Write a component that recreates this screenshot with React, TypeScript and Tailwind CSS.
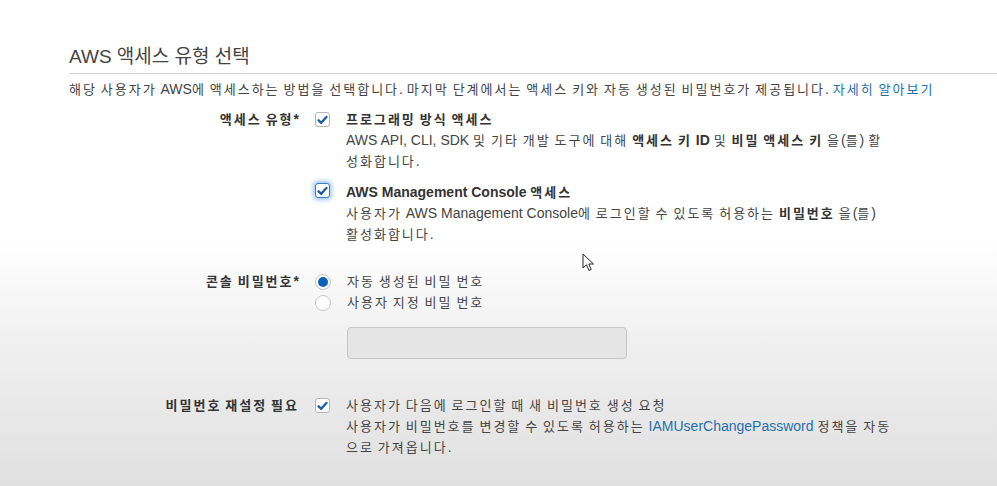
import React from 'react';

const font = { fontFamily: '"Liberation Sans", "Noto Sans CJK KR", sans-serif' };

// Hangul runs: slightly smaller glyphs with extra spacing, like the original screenshot
function kr(text: string) {
    return text.split(/([\uAC00-\uD7A3]+)/).map((part, i) =>
        /[\uAC00-\uD7A3]/.test(part) ? (
            <span key={i} className="text-[13px] tracking-[2px]">
                {part}
            </span>
        ) : (
            part
        ),
    );
}

function Check({ focus = false }: { focus?: boolean }) {
    return (
        <span
            className={
                'flex h-[15px] w-[15px] items-center justify-center rounded-[3px] border bg-white ' +
                (focus ? 'border-[#3b7fc4] shadow-[0_0_4px_2px_rgba(80,150,230,0.55)]' : 'border-[#b5b5b5]')
            }
        >
            <svg width="11" height="10" viewBox="0 0 11 10">
                <path d="M1.6 5.3 L4.2 7.8 L9.4 2" fill="none" stroke="#1b5ea6" strokeWidth="2.4" strokeLinecap="round" strokeLinejoin="round" />
            </svg>
        </span>
    );
}

function Radio({ on = false }: { on?: boolean }) {
    return (
        <span className="flex h-[16px] w-[16px] items-center justify-center rounded-full border border-[#c4c4c4] bg-white">
            {on && <span className="h-[10px] w-[10px] rounded-full bg-[#0b62b9]" />}
        </span>
    );
}

function Row({ label, control, children }: { label: string; control: React.ReactNode; children: React.ReactNode }) {
    return (
        <div className="flex pl-[69px]">
            <div className="w-[230px] whitespace-nowrap text-right font-bold leading-[21px] text-[#333]">{kr(label)}</div>
            <div className="ml-[16px] flex flex-col">{control}</div>
            <div className="ml-[16px] whitespace-nowrap">{children}</div>
        </div>
    );
}

export default function App() {
    return (
        <div
            className="relative h-[486px] w-[997px] overflow-hidden bg-[linear-gradient(to_bottom,#ffffff_0%,#ffffff_50%,#f0f0f0_70%,#e0e0e0_100%)] text-[14px] text-[#444]"
            style={font}
        >
            <div className="pl-[69px] pt-[45px]">
                <h2 className="text-[19px] leading-[24px] text-[#444]">AWS 액세스 유형 선택</h2>
                <div className="mt-[4px] border-b border-[#cfcfcf]" />
                <p className="mt-[5px] whitespace-nowrap leading-[20px]">
                    {kr('해당 사용자가 AWS에 액세스하는 방법을 선택합니다. 마지막 단계에서는 액세스 키와 자동 생성된 비밀번호가 제공됩니다. ')}
                    <span className="text-[#1f6fae]">{kr('자세히 알아보기')}</span>
                </p>
            </div>

            <div className="mt-[9px] flex flex-col">
                <Row
                    label="액세스 유형*"
                    control={
                        <>
                            <div className="mt-[3px]"><Check /></div>
                            <div className="mt-[56px]"><Check focus /></div>
                        </>
                    }
                >
                    <div className="leading-[21px]">
                        <div className="font-bold text-[#333]">{kr('프로그래밍 방식 액세스')}</div>
                        <div>
                            {kr('AWS API, CLI, SDK 및 기타 개발 도구에 대해 ')}
                            <b className="text-[#333]">{kr('액세스 키 ID')}</b>
                            {kr(' 및 ')}
                            <b className="text-[#333]">{kr('비밀 액세스 키')}</b>
                            {kr(' 을(를) 활')}
                            <br />
                            {kr('성화합니다.')}
                        </div>
                        <div className="mt-[10px] font-bold text-[#333]">{kr('AWS Management Console 액세스')}</div>
                        <div>
                            {kr('사용자가 AWS Management Console에 로그인할 수 있도록 허용하는 ')}
                            <b className="text-[#333]">{kr('비밀번호')}</b>
                            {kr(' 을(를)')}
                            <br />
                            {kr('활성화합니다.')}
                        </div>
                    </div>
                </Row>

                <div className="mt-[26px]">
                    <Row
                        label="콘솔 비밀번호*"
                        control={
                            <>
                                <div className="mt-[3px]"><Radio on /></div>
                                <div className="mt-[5px]"><Radio /></div>
                            </>
                        }
                    >
                        <div className="leading-[20px]">
                            <div>{kr('자동 생성된 비밀 번호')}</div>
                            <div>{kr('사용자 지정 비밀 번호')}</div>
                        </div>
                    </Row>
                </div>

                <div className="ml-[347px] mt-[14px] h-[32px] w-[280px] rounded-[4px] border border-[#c6c6c6] bg-[#e5e5e5]" />

                <div className="mt-[36px]">
                    <Row label="비밀번호 재설정 필요" control={<div className="mt-[3px]"><Check /></div>}>
                        <div className="leading-[21px]">
                            <div>{kr('사용자가 다음에 로그인할 때 새 비밀번호 생성 요청')}</div>
                            <div>
                                {kr('사용자가 비밀번호를 변경할 수 있도록 허용하는 ')}
                                <span className="text-[#1f6fae]">IAMUserChangePassword</span>
                                {kr(' 정책을 자동')}
                                <br />
                                {kr('으로 가져옵니다.')}
                            </div>
                        </div>
                    </Row>
                </div>
            </div>

            {/* mouse pointer */}
            <svg className="absolute left-[582px] top-[253px]" width="13" height="20" viewBox="0 0 13 20">
                <path d="M1 1 L1 15 L4.5 11.8 L7 17.5 L9.2 16.5 L6.8 11 L11.5 11 Z" fill="#fff" stroke="#222" strokeWidth="1" strokeLinejoin="round" />
            </svg>
        </div>
    );
}
